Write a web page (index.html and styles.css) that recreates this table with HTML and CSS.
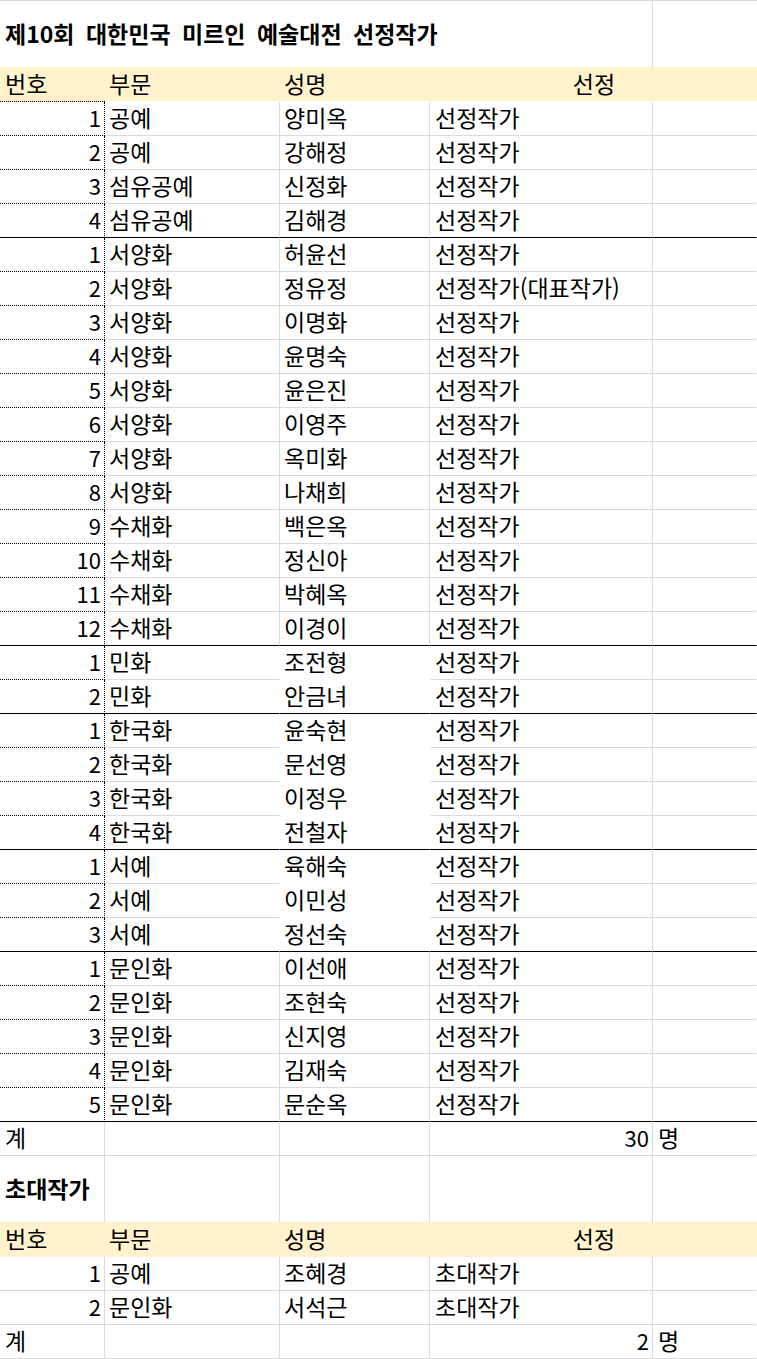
FILE: index.html
```html
<!DOCTYPE html>
<html lang="ko">
<head>
  <meta charset="UTF-8" />
  <meta name="viewport" content="width=device-width, initial-scale=1.0"/>
  <title>선정작가</title>
  <link rel="stylesheet" href="styles.css">
</head>
<body>
  <table class="sheet">
    <colgroup>
      <col class="c-no">
      <col class="c-part">
      <col class="c-name">
      <col class="c-pick">
      <col class="c-etc">
    </colgroup>

    <tbody class="cap-one">
      <tr class="title">
        <td colspan="4" class="cap">제10회 대한민국 미르인 예술대전 선정작가</td>
        <td class="etc"></td>
      </tr>
      <tr class="head">
        <td class="corner">번호</td>
        <td>부문</td>
        <td>성명</td>
        <td colspan="2" class="mid">선정</td>
      </tr>
    </tbody>

    <tbody class="grp">
      <tr><td class="no">1</td><td class="part">공예</td><td class="name">양미옥</td><td class="pick">선정작가</td><td class="etc"></td></tr>
      <tr><td class="no">2</td><td class="part">공예</td><td class="name">강해정</td><td class="pick">선정작가</td><td class="etc"></td></tr>
      <tr><td class="no">3</td><td class="part">섬유공예</td><td class="name">신정화</td><td class="pick">선정작가</td><td class="etc"></td></tr>
      <tr><td class="no">4</td><td class="part">섬유공예</td><td class="name">김해경</td><td class="pick">선정작가</td><td class="etc"></td></tr>
    </tbody>

    <tbody class="grp">
      <tr><td class="no">1</td><td class="part">서양화</td><td class="name">허윤선</td><td class="pick">선정작가</td><td class="etc"></td></tr>
      <tr><td class="no">2</td><td class="part">서양화</td><td class="name">정유정</td><td class="pick">선정작가(대표작가)</td><td class="etc"></td></tr>
      <tr><td class="no">3</td><td class="part">서양화</td><td class="name">이명화</td><td class="pick">선정작가</td><td class="etc"></td></tr>
      <tr><td class="no">4</td><td class="part">서양화</td><td class="name">윤명숙</td><td class="pick">선정작가</td><td class="etc"></td></tr>
      <tr><td class="no">5</td><td class="part">서양화</td><td class="name">윤은진</td><td class="pick">선정작가</td><td class="etc"></td></tr>
      <tr><td class="no">6</td><td class="part">서양화</td><td class="name">이영주</td><td class="pick">선정작가</td><td class="etc"></td></tr>
      <tr><td class="no">7</td><td class="part">서양화</td><td class="name">옥미화</td><td class="pick">선정작가</td><td class="etc"></td></tr>
      <tr><td class="no">8</td><td class="part">서양화</td><td class="name">나채희</td><td class="pick">선정작가</td><td class="etc"></td></tr>
      <tr><td class="no">9</td><td class="part">수채화</td><td class="name">백은옥</td><td class="pick">선정작가</td><td class="etc"></td></tr>
      <tr><td class="no">10</td><td class="part">수채화</td><td class="name">정신아</td><td class="pick">선정작가</td><td class="etc"></td></tr>
      <tr><td class="no">11</td><td class="part">수채화</td><td class="name">박혜옥</td><td class="pick">선정작가</td><td class="etc"></td></tr>
      <tr><td class="no">12</td><td class="part">수채화</td><td class="name">이경이</td><td class="pick">선정작가</td><td class="etc"></td></tr>
    </tbody>

    <tbody class="grp fill">
      <tr><td class="no">1</td><td class="part">민화</td><td class="name">조전형</td><td class="pick">선정작가</td><td class="etc"></td></tr>
      <tr><td class="no">2</td><td class="part">민화</td><td class="name">안금녀</td><td class="pick">선정작가</td><td class="etc"></td></tr>
    </tbody>

    <tbody class="grp fill">
      <tr><td class="no">1</td><td class="part">한국화</td><td class="name">윤숙현</td><td class="pick">선정작가</td><td class="etc"></td></tr>
      <tr><td class="no">2</td><td class="part">한국화</td><td class="name">문선영</td><td class="pick">선정작가</td><td class="etc"></td></tr>
      <tr><td class="no">3</td><td class="part">한국화</td><td class="name">이정우</td><td class="pick">선정작가</td><td class="etc"></td></tr>
      <tr><td class="no">4</td><td class="part">한국화</td><td class="name">전철자</td><td class="pick">선정작가</td><td class="etc"></td></tr>
    </tbody>

    <tbody class="grp fill">
      <tr><td class="no">1</td><td class="part">서예</td><td class="name">육해숙</td><td class="pick">선정작가</td><td class="etc"></td></tr>
      <tr><td class="no">2</td><td class="part">서예</td><td class="name">이민성</td><td class="pick">선정작가</td><td class="etc"></td></tr>
      <tr><td class="no">3</td><td class="part">서예</td><td class="name">정선숙</td><td class="pick">선정작가</td><td class="etc"></td></tr>
    </tbody>

    <tbody class="grp">
      <tr><td class="no">1</td><td class="part">문인화</td><td class="name">이선애</td><td class="pick">선정작가</td><td class="etc"></td></tr>
      <tr><td class="no">2</td><td class="part">문인화</td><td class="name">조현숙</td><td class="pick">선정작가</td><td class="etc"></td></tr>
      <tr><td class="no">3</td><td class="part">문인화</td><td class="name">신지영</td><td class="pick">선정작가</td><td class="etc"></td></tr>
      <tr><td class="no">4</td><td class="part">문인화</td><td class="name">김재숙</td><td class="pick">선정작가</td><td class="etc"></td></tr>
      <tr><td class="no">5</td><td class="part">문인화</td><td class="name">문순옥</td><td class="pick">선정작가</td><td class="etc"></td></tr>
    </tbody>

    <tbody class="sum">
      <tr><td>계</td><td></td><td></td><td class="num">30</td><td class="etc">명</td></tr>
    </tbody>

    <tbody class="cap-two">
      <tr class="title">
        <td class="cap">초대작가</td><td></td><td></td><td></td><td class="etc"></td>
      </tr>
      <tr class="head">
        <td>번호</td>
        <td>부문</td>
        <td>성명</td>
        <td colspan="2" class="mid">선정</td>
      </tr>
    </tbody>

    <tbody class="invite">
      <tr><td class="no">1</td><td class="part">공예</td><td class="name">조혜경</td><td class="pick">초대작가</td><td class="etc"></td></tr>
      <tr><td class="no">2</td><td class="part">문인화</td><td class="name">서석근</td><td class="pick">초대작가</td><td class="etc"></td></tr>
    </tbody>

    <tbody class="sum">
      <tr><td>계</td><td></td><td></td><td class="num">2</td><td class="etc">명</td></tr>
    </tbody>
  </table>
</body>
</html>
```

FILE: styles.css
```css
body {
  margin: 0;
  background: #fff;
  color: #000;
  font-family: "Noto Sans CJK KR", "Malgun Gothic", sans-serif;
  font-size: 23px;
}

.sheet {
  width: 757px;
  table-layout: fixed;
  border-collapse: separate;
  border-spacing: 0;
  border-top: 1px solid #dadada;
}
.c-no { width: 105px; }
.c-part { width: 175px; }
.c-name { width: 150px; }
.c-pick { width: 223px; }
.c-etc { width: 104px; }

td {
  box-sizing: border-box;
  height: 34px;
  padding: 0 3px 3px 4px;
  line-height: 26px;
  white-space: nowrap;
  overflow: visible;
  vertical-align: middle;
  border-right: 1px solid #dadada;
  border-bottom: 1px solid #dadada;
}
td.etc {
  border-right-color: transparent;
}

/* titles */
.title td {
  height: 66px;
  border-bottom: 0;
}
.title .cap {
  font-weight: bold;
  padding-left: 5px;
}
.cap-one .cap {
  word-spacing: 5px;
}

/* header rows */
.head td {
  height: 35px;
  background: #fff2cc;
  border-right: 0;
  border-bottom-color: #fff;
  padding-bottom: 3px;
}
.cap-two .head td {
  border-bottom-color: #fff2cc;
}
.head td:first-child {
  padding-left: 5px;
}
.head td.corner {
  border-bottom: 1px dotted #000;
}
.head .mid {
  text-align: center;
}

/* data rows */
td.no {
  text-align: right;
  font-size: 22px;
}
.grp td.no {
  border-right: 1px dotted #000;
  border-bottom: 1px dotted #000;
}
.grp td.pick,
.invite td.pick {
  padding-left: 5px;
}

/* groups where the name column is filled white */
.fill td.part {
  border-right-color: #fff;
}
.fill td.name {
  border-right-color: #fff;
  border-bottom-color: #fff;
}

.grp tr:last-child td,
.grp tr:last-child td.no,
.fill tr:last-child td.name {
  border-bottom: 1px solid #000;
}

/* totals */
.sum td:first-child {
  padding-left: 5px;
}
.sum td.num {
  text-align: right;
  font-size: 22px;
}
.sum td.etc {
  padding-left: 5px;
}
```
